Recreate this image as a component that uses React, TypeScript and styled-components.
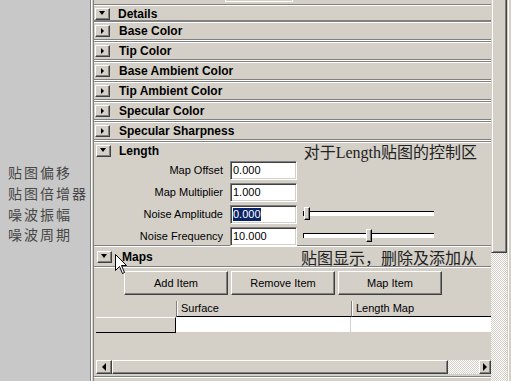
import React from "react";
import styled, { createGlobalStyle } from "styled-components";

const FACE = "#d4d0c8";
const SHADOW = "#808080";
const DARK = "#404040";
const LIGHT = "#ffffff";
const SEL = "#0a246a";

const GlobalStyle = createGlobalStyle`
  html, body { margin: 0; padding: 0; background: #c8c8c8; overflow: hidden; }
  body { font-family: "Liberation Sans", Arial, sans-serif; }
`;

const Page = styled.div`
  position: relative;
  display: flex;
  width: 511px;
  height: 381px;
  overflow: hidden;
  background: #c8c8c8;
`;

const Side = styled.div`
  width: 90px;
  flex: none;
  box-sizing: border-box;
  padding: 162px 0 0 8px;
  display: flex;
  flex-direction: column;
  gap: 0.8px;
  font-family: "Noto Sans CJK SC", sans-serif;
  font-size: 14px;
  letter-spacing: 2px;
  line-height: 20px;
  color: #474747;
  white-space: nowrap;
`;

const SideLine = styled.div`
  height: 20px;
`;

const Bezel = styled.div`
  width: 4px;
  flex: none;
  background: linear-gradient(
    to right,
    ${SHADOW} 0 1px,
    ${LIGHT} 1px 2px,
    ${FACE} 2px 3px,
    ${SHADOW} 3px 4px
  );
`;

const Content = styled.div`
  width: 397px;
  flex: none;
  display: flex;
  flex-direction: column;
  background: ${FACE};
  font-size: 11px;
  color: #000;
`;

const TopStrip = styled.div`
  height: 4px;
  flex: none;
  padding-left: 131px;
`;

const StubField = styled.div`
  width: 66px;
  height: 1px;
  border: 1px solid ${LIGHT};
  border-top: none;
  background: ${FACE};
`;

const Frame = styled.div<{ $h?: number }>`
  flex: none;
  box-sizing: border-box;
  border-top: 1px solid ${SHADOW};
  border-bottom: 1px solid ${LIGHT};
  box-shadow: inset 0 1px ${LIGHT}, inset 0 -1px ${SHADOW};
  ${(p) => (p.$h ? `height: ${p.$h}px;` : "")}
  display: flex;
  flex-direction: column;
`;

const Header = styled.div<{ $h: number; $pl?: number }>`
  height: ${(p) => p.$h}px;
  flex: none;
  display: flex;
  align-items: center;
  padding-left: ${(p) => p.$pl ?? 1}px;
`;

const Toggle = styled.span<{ $open?: boolean }>`
  width: 15px;
  height: 12px;
  box-sizing: border-box;
  flex: none;
  display: flex;
  align-items: center;
  justify-content: center;
  background: ${FACE};
  border-top: 1px solid ${LIGHT};
  border-left: 1px solid ${LIGHT};
  border-right: 1px solid ${DARK};
  border-bottom: 1px solid ${DARK};
  box-shadow: inset -1px -1px ${SHADOW};
  &::after {
    content: "";
    display: block;
    width: 0;
    height: 0;
    ${(p) =>
      p.$open
        ? `border-left: 3px solid transparent; border-right: 3px solid transparent; border-top: 4px solid #000; margin: 0 1px 1px 0;`
        : `border-top: 3px solid transparent; border-bottom: 3px solid transparent; border-left: 3px solid #000; margin: 0 1px 1px 0;`}
  }
`;

const Title = styled.span<{ $ml?: number }>`
  margin-left: ${(p) => p.$ml ?? 8}px;
  font-family: "Liberation Sans", Arial, sans-serif;
  font-weight: bold;
  font-size: 12px;
  color: #000;
  white-space: nowrap;
`;

const Note = styled.span`
  margin-left: auto;
  margin-right: 14px;
  font-family: "Liberation Serif", "Noto Sans CJK SC", serif;
  font-size: 16px;
  color: #222;
  white-space: nowrap;
`;

const NoteCJK = styled.span`
  font-family: "Noto Sans CJK SC", sans-serif;
`;

const FieldRow = styled.div`
  height: 22px;
  flex: none;
  display: flex;
  align-items: center;
`;

const Label = styled.span`
  width: 129px;
  text-align: right;
  font-size: 11px;
  white-space: nowrap;
`;

const Field = styled.div`
  margin-left: 7px;
  width: 67px;
  height: 19px;
  box-sizing: border-box;
  flex: none;
  background: ${LIGHT};
  border-top: 1px solid ${SHADOW};
  border-left: 1px solid ${SHADOW};
  border-right: 1px solid ${LIGHT};
  border-bottom: 1px solid ${LIGHT};
  box-shadow: inset 1px 1px ${DARK}, inset -1px -1px ${FACE};
  display: flex;
  align-items: center;
  padding-left: 2px;
  font-size: 11px;
`;

const Sel = styled.span`
  background: ${SEL};
  color: #fff;
  padding: 0 0 1px;
`;

const Slider = styled.div`
  position: relative;
  margin-left: 6px;
  width: 131px;
  height: 14px;
  flex: none;
`;

const Track = styled.div`
  position: absolute;
  left: 0;
  right: 0;
  top: 4px;
  height: 5px;
  box-sizing: border-box;
  background: ${LIGHT};
  border-top: 1px solid #000;
  border-left: 1px solid #000;
`;

const Thumb = styled.div`
  position: absolute;
  top: 0;
  width: 6px;
  height: 13px;
  box-sizing: border-box;
  background: ${FACE};
  border-top: 1px solid ${LIGHT};
  border-left: 1px solid ${LIGHT};
  border-right: 1px solid #000;
  border-bottom: 1px solid #000;
  box-shadow: inset -1px -1px ${SHADOW};
`;

const Divider = styled.div`
  height: 2px;
  flex: none;
  background: linear-gradient(${SHADOW} 0 1px, ${LIGHT} 1px 2px);
`;

const ButtonBar = styled.div`
  display: flex;
  gap: 3px;
  padding: 3px 0 0 30px;
  flex: none;
`;

const Button = styled.div`
  width: 104px;
  height: 24px;
  box-sizing: border-box;
  display: flex;
  align-items: center;
  justify-content: center;
  background: ${FACE};
  border-top: 1px solid ${LIGHT};
  border-left: 1px solid ${LIGHT};
  border-right: 1px solid ${DARK};
  border-bottom: 1px solid ${DARK};
  box-shadow: inset -1px -1px ${SHADOW};
  font-size: 11px;
`;

const Table = styled.div`
  margin: 6px 0 0 2px;
  display: grid;
  grid-template-columns: 80px 175px 1fr;
  grid-template-rows: 16px 16px;
  flex: none;
`;

const Corner = styled.div``;

const ColHead = styled.div`
  box-sizing: border-box;
  border-left: 1px solid ${SHADOW};
  box-shadow: inset 1px 0 ${LIGHT};
  border-bottom: 1px solid #000;
  padding-left: 4px;
  font-size: 11px;
  line-height: 15px;
`;

const RowHead = styled.div`
  box-sizing: border-box;
  border-top: 1px solid ${LIGHT};
  border-bottom: 1px solid #000;
  border-right: 1px solid #000;
  background: ${FACE};
`;

const Cell = styled.div<{ $last?: boolean }>`
  background: ${LIGHT};
  height: 15px;
  box-sizing: border-box;
  border-right: ${(p) => (p.$last ? "none" : `1px solid ${FACE}`)};
`;

const HScroll = styled.div`
  margin: 27px 0 0 2px;
  height: 14px;
  display: flex;
  flex: none;
`;

const ArrowBtn = styled.div<{ $dir: "left" | "right"; $w: number }>`
  width: ${(p) => p.$w}px;
  height: 14px;
  box-sizing: border-box;
  flex: none;
  display: flex;
  align-items: center;
  justify-content: center;
  background: ${FACE};
  border-top: 1px solid ${LIGHT};
  border-left: 1px solid ${LIGHT};
  border-right: 1px solid ${DARK};
  border-bottom: 1px solid ${DARK};
  box-shadow: inset -1px -1px ${SHADOW};
  &::after {
    content: "";
    width: 0;
    height: 0;
    border-top: 4px solid transparent;
    border-bottom: 4px solid transparent;
    ${(p) =>
      p.$dir === "left"
        ? `border-right: 4px solid #000;`
        : `border-left: 4px solid #000;`}
  }
`;

const HThumb = styled.div`
  width: 336px;
  height: 14px;
  box-sizing: border-box;
  flex: none;
  background: ${FACE};
  border-top: 1px solid ${LIGHT};
  border-left: 1px solid ${LIGHT};
  border-right: 1px solid ${DARK};
  border-bottom: 1px solid ${DARK};
  box-shadow: inset -1px -1px ${SHADOW};
`;

const Checker = styled.div`
  flex: 1;
  background-color: ${FACE};
  background-image: conic-gradient(
    ${LIGHT} 0 25%,
    ${FACE} 0 50%,
    ${LIGHT} 0 75%,
    ${FACE} 0
  );
  background-size: 2px 2px;
`;

const BottomEdge = styled.div`
  height: 6px;
  flex: none;
  background: linear-gradient(
    ${FACE} 0 2px,
    ${SHADOW} 2px 3px,
    ${LIGHT} 3px 4px,
    ${FACE} 4px 6px
  );
`;

const VScroll = styled.div`
  width: 16px;
  flex: none;
  display: flex;
  flex-direction: column;
`;

const VThumb = styled.div`
  height: 253px;
  flex: none;
  box-sizing: border-box;
  background: ${FACE};
  border-left: 1px solid ${FACE};
  border-right: 1px solid ${DARK};
  border-bottom: 1px solid ${DARK};
  box-shadow: inset 1px 0 ${LIGHT}, inset -1px -1px ${SHADOW};
`;

const RightEdge = styled.div`
  flex: 1;
  background: linear-gradient(
    to right,
    ${FACE} 0 1px,
    ${LIGHT} 1px 2px,
    ${FACE} 2px 100%
  );
`;

const Cursor = styled.svg`
  position: absolute;
  left: 115px;
  top: 254px;
`;

const subFrames = [
  "Base Color",
  "Tip Color",
  "Base Ambient Color",
  "Tip Ambient Color",
  "Specular Color",
  "Specular Sharpness",
];

const fields = [
  { label: "Map Offset", value: "0.000" },
  { label: "Map Multiplier", value: "1.000" },
  { label: "Noise Amplitude", value: "0.000", selected: true, slider: 1 },
  { label: "Noise Frequency", value: "10.000", slider: 63 },
];

const sideNotes = ["贴图偏移", "贴图倍增器", "噪波振幅", "噪波周期"];

export default function App() {
  return (
    <Page>
      <GlobalStyle />
      <Side>
        {sideNotes.map((t) => (
          <SideLine key={t}>{t}</SideLine>
        ))}
      </Side>
      <Bezel />
      <Content>
        <TopStrip>
          <StubField />
        </TopStrip>
        <Frame $h={18}>
          <Header $h={17}>
            <Toggle $open />
            <Title $ml={8}>Details</Title>
          </Header>
        </Frame>
        {subFrames.map((s, i) => (
          <Frame key={s} $h={20} style={i === 0 ? { marginTop: -1 } : undefined}>
            <Header $h={18}>
              <Toggle />
              <Title $ml={9}>{s}</Title>
            </Header>
          </Frame>
        ))}
        <Frame $h={106}>
          <Header $h={17} $pl={2}>
            <Toggle $open />
            <Title $ml={8}>Length</Title>
            <Note>
              <NoteCJK>对于</NoteCJK>Length<NoteCJK>贴图的控制区</NoteCJK>
            </Note>
          </Header>
          {fields.map((f) => (
            <FieldRow key={f.label}>
              <Label>{f.label}</Label>
              <Field>{f.selected ? <Sel>{f.value}</Sel> : f.value}</Field>
              {f.slider !== undefined && (
                <Slider>
                  <Track />
                  <Thumb style={{ left: f.slider }} />
                </Slider>
              )}
            </FieldRow>
          ))}
        </Frame>
        <Header $h={19} $pl={3}>
          <Toggle $open />
          <Title $ml={10}>Maps</Title>
          <Note>
            <NoteCJK>贴图显示，删除及添加从</NoteCJK>
          </Note>
        </Header>
        <Divider />
        <ButtonBar>
          <Button>Add Item</Button>
          <Button>Remove Item</Button>
          <Button>Map Item</Button>
        </ButtonBar>
        <Table>
          <Corner />
          <ColHead>Surface</ColHead>
          <ColHead>Length Map</ColHead>
          <RowHead />
          <Cell />
          <Cell $last />
        </Table>
        <HScroll>
          <ArrowBtn $dir="left" $w={16} />
          <HThumb />
          <Checker />
          <ArrowBtn $dir="right" $w={12} />
        </HScroll>
        <BottomEdge />
      </Content>
      <VScroll>
        <VThumb />
        <Checker />
      </VScroll>
      <RightEdge />
      <Cursor width="13" height="21" viewBox="0 0 13 21">
        <path
          d="M0.5 0.5 L0.5 16.5 L4.5 12.5 L7.5 19.5 L9.5 18.5 L6.5 11.5 L11.5 11.5 Z"
          fill="#fff"
          stroke="#000"
          strokeWidth="1"
        />
      </Cursor>
    </Page>
  );
}
